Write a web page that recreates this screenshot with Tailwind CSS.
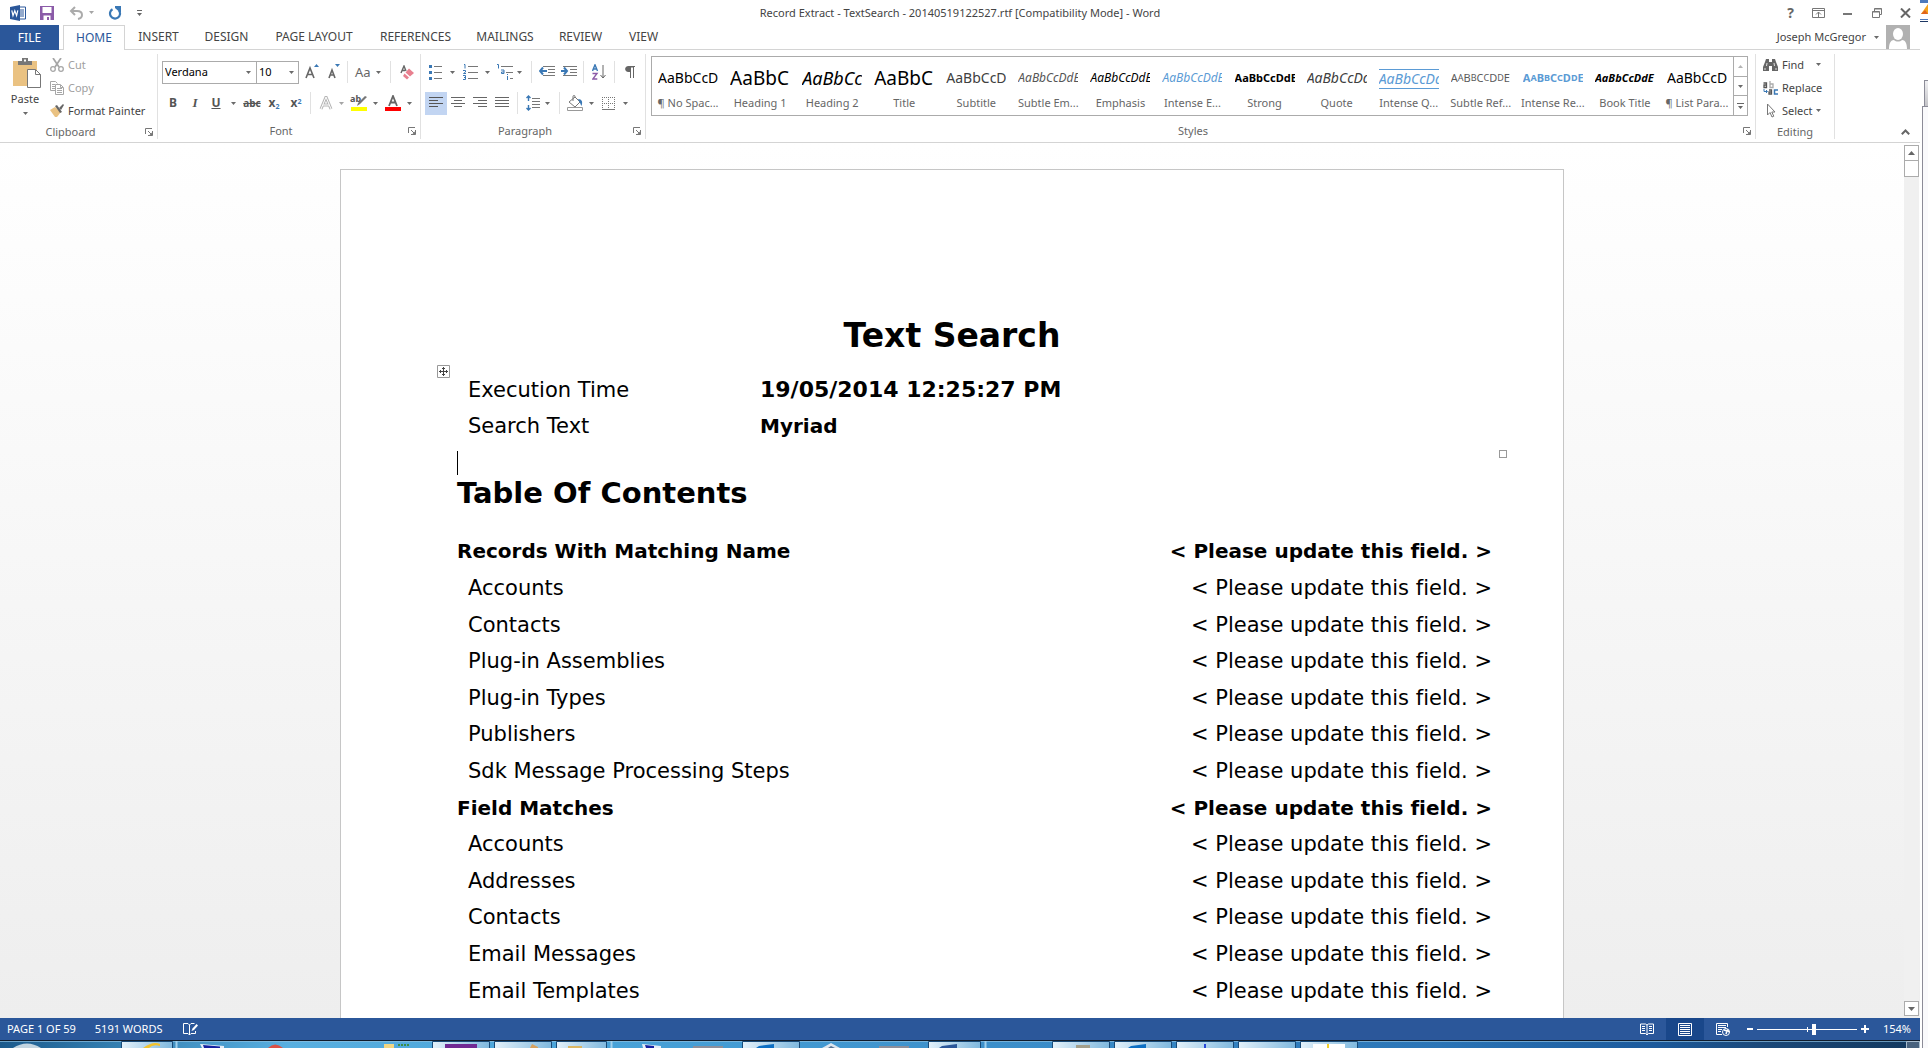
<!DOCTYPE html>
<html lang="en">
<head>
<meta charset="utf-8">
<title>Record Extract - Word</title>
<script src="https://cdn.jsdelivr.net/npm/@tailwindcss/browser@4"></script>
</head>
<body class="h-screen overflow-hidden bg-white font-['Noto_Sans','Open_Sans',sans-serif] text-[11px] leading-4 text-[#444]">

<svg class="hidden">
  <symbol id="dn" viewBox="0 0 5 3"><path d="M0 0h5L2.500 3z" fill="#6a6a6a"/></symbol>
  <symbol id="launch" viewBox="0 0 8 8"><path d="M.5 6V.5H7" fill="none" stroke="#777"/><path d="M3 3l3 3M7.500 3v4.500H3" fill="none" stroke="#777"/><path d="M4 7.500h3.500V4z" fill="#777"/></symbol>
</svg>

<div class="flex h-full">
<div class="flex min-w-0 flex-1 flex-col">

  <!-- Title bar -->
  <header class="relative flex h-[25px] shrink-0 items-center justify-center">
    <div class="absolute inset-y-0 left-[10px] flex items-center">
      <svg class="mr-[14px] h-4 w-4" viewBox="0 0 16 16"><path d="M8 2h7.500v12H8z" fill="#fff" stroke="#2b579a"/><path d="M9 5h5M9 7h5M9 9h5M9 11h5" stroke="#2b579a"/><path d="M0 2l10-2v16L0 14z" fill="#2b579a"/><path d="M1.800 5.300l1.200 5.400 1.800-5 1.800 5 1.200-5.400" fill="none" stroke="#fff" stroke-width="1.200"/></svg>
      <button aria-label="Save" class="mr-[15px]"><svg class="h-[14px] w-[14px]" viewBox="0 0 14 14"><path d="M0 0h14v14H0z" fill="#8b5ba8"/><path d="M2.500 1h9v6h-9zM3.500 9.500h7V14H9v-3H7v3H3.500z" fill="#fff"/></svg></button>
      <button aria-label="Undo" class="mr-[6px]"><svg class="h-[14px] w-[14px]" viewBox="0 0 14 14"><path d="M6 1L2 5l4 4M2 5h6c3 0 5 1.500 5 4 0 2-1.500 3.500-4 4" fill="none" stroke="#ababab" stroke-width="2"/></svg></button>
      <svg class="mr-[14px] h-[3px] w-[5px] opacity-60"><use href="#dn"/></svg>
      <button aria-label="Redo" class="mr-[15px]"><svg class="h-[14px] w-[14px]" viewBox="0 0 14 14"><path d="M4.500 3.200A5 5 0 1 0 11 4.500" fill="none" stroke="#3a78b5" stroke-width="2.200"/><path d="M7 0h6v6h-1.500L7 2z" fill="#3a78b5"/></svg></button>
      <button aria-label="Customize"><svg class="h-[6px] w-[5px]" viewBox="0 0 5 6"><path d="M0 0h5v1H0zM0 3h5L2.500 6z" fill="#666"/></svg></button>
    </div>
    <h1>Record Extract - TextSearch - 20140519122527.rtf [Compatibility Mode] - Word</h1>
    <div class="absolute inset-y-0 right-[9px] flex items-center gap-[18px]">
      <button aria-label="Help" class="text-[14px] font-bold text-[#666]">?</button>
      <button aria-label="Ribbon display"><svg class="h-[10px] w-[13px]" viewBox="0 0 13 10"><path d="M.5.500h12v9H.5zM.5 2.500h12M6.500 9V4M4 6.500L6.500 4 9 6.500" fill="none" stroke="#777"/></svg></button>
      <button aria-label="Minimize"><svg class="h-[10px] w-[9px]" viewBox="0 0 9 10"><path d="M0 5h9v2H0z" fill="#777"/></svg></button>
      <button aria-label="Restore" class="ml-[2px]"><svg class="h-[10px] w-[10px]" viewBox="0 0 10 10"><path d="M2.500 3V.500h7v6H7.500M2.500 1h7" fill="none" stroke="#777"/><path d="M.5 3.500h7v6h-7zM.5 4h7" fill="none" stroke="#777"/></svg></button>
      <button aria-label="Close"><svg class="h-[10px] w-[11px]" viewBox="0 0 11 10"><path d="M1 .5l9 9M10 .5l-9 9" stroke="#666" stroke-width="2"/></svg></button>
    </div>
  </header>

  <!-- Ribbon tabs -->
  <nav class="flex h-[25px] shrink-0 items-stretch border-b border-[#d4d4d4] text-[12px]">
    <a href="#" class="-mb-px flex w-[59px] items-center justify-center bg-[#2b579a] text-white">FILE</a>
    <a href="#" class="-mb-px ml-1 flex w-[62px] items-center justify-center border border-b-0 border-[#d4d4d4] bg-white text-[#2b579a]">HOME</a>
    <a href="#" class="flex w-[67px] items-center justify-center">INSERT</a>
    <a href="#" class="flex w-[69px] items-center justify-center">DESIGN</a>
    <a href="#" class="flex w-[106px] items-center justify-center">PAGE LAYOUT</a>
    <a href="#" class="flex w-[97px] items-center justify-center">REFERENCES</a>
    <a href="#" class="flex w-[82px] items-center justify-center">MAILINGS</a>
    <a href="#" class="flex w-[69px] items-center justify-center">REVIEW</a>
    <a href="#" class="flex w-[57px] items-center justify-center">VIEW</a>
    <button class="ml-auto mr-[10px] flex items-center"><span class="text-[11px]">Joseph McGregor</span><svg class="ml-2 mr-[7px] h-[3px] w-[5px]"><use href="#dn"/></svg><svg class="h-6 w-6" viewBox="0 0 24 24"><path d="M0 0h24v24H0z" fill="#b1b1b1"/><ellipse cx="12" cy="9" rx="5" ry="6" fill="#fff"/><path d="M3 24c0-6 2-9 5-9 2 2 6 2 8 0 3 0 5 3 5 9z" fill="#fff"/></svg></button>
  </nav>

  <!-- Ribbon -->
  <div class="flex h-[93px] shrink-0 border-b border-[#d4d4d4] pt-1 pb-[3px]">

    <section class="flex w-[158px] flex-col border-r border-[#e1e1e1]">
      <div class="flex h-[72px]">
        <button class="flex w-[50px] flex-col items-center pt-1">
          <svg class="h-[30px] w-[28px] ml-1" viewBox="0 0 28 30"><path d="M0 3h24v25H0z" fill="#eac282"/><path d="M5 3h4V0h6v3h4v4H5z" fill="#777"/><path d="M11 1.500h2v2h-2z" fill="#fff"/><path d="M14.500 11.500h8l5 5v13h-13z" fill="#fff" stroke="#777"/><path d="M22.500 11.500v5h5" fill="none" stroke="#777"/></svg>
          <span class="mt-[3px]">Paste</span>
          <svg class="mt-[5px] h-[3px] w-[5px]"><use href="#dn"/></svg>
        </button>
        <div class="-mt-px flex flex-col">
          <button class="flex h-[23px] items-center gap-1 text-[#a0a0a0]"><svg class="h-[14px] w-[14px]" viewBox="0 0 14 14"><path d="M3 0l6 9M11 0L5 9" stroke="#a6a6a6" stroke-width="1.700"/><circle cx="3" cy="11" r="2.300" fill="none" stroke="#a6a6a6" stroke-width="1.300"/><circle cx="11" cy="11" r="2.300" fill="none" stroke="#a6a6a6" stroke-width="1.300"/></svg>Cut</button>
          <button class="flex h-[23px] items-center gap-1 text-[#a0a0a0]"><svg class="h-[14px] w-[14px]" viewBox="0 0 14 14"><path d="M5 9.500H.5v-9h5l2 2" fill="none" stroke="#a6a6a6"/><path d="M2 3.500h3M2 5.500h3M2 7.500h3" stroke="#a6a6a6"/><path d="M5.500 3.500h5l3 3v7h-8z" fill="#fff" stroke="#a6a6a6"/><path d="M7 7.500h5M7 9.500h5M7 11.500h5M10.500 4v2.500H13" fill="none" stroke="#a6a6a6"/></svg>Copy</button>
          <button class="flex h-[23px] items-center gap-1"><svg class="h-[14px] w-[14px]" viewBox="0 0 14 14"><path d="M5 3L0 6l5 7h2l4-5z" fill="#eac282"/><path d="M5 2l2-1 5 7-2 1z" fill="#666"/><path d="M9 4l4-4 1 1-3 5z" fill="#666"/></svg>Format Painter</button>
        </div>
      </div>
      <div class="relative mt-[2px] text-center text-[#666] pr-4">Clipboard<svg class="absolute right-1 top-1 h-2 w-2"><use href="#launch"/></svg></div>
    </section>

    <section class="flex w-[263px] flex-col border-r border-[#e1e1e1]">
      <div class="flex h-[72px] flex-col pl-1 pt-[7px]">
        <div class="flex h-[22px] items-center">
          <label class="relative"><select aria-label="Font" class="block h-[23px] w-[95px] appearance-none border border-[#ababab] bg-white pl-[2px] text-[11px] text-black"><option>Verdana</option></select><svg class="absolute right-[6px] top-[10px] h-[3px] w-[5px]"><use href="#dn"/></svg></label>
          <label class="relative -ml-px"><select aria-label="Font size" class="block h-[23px] w-[43px] appearance-none border border-[#ababab] bg-white pl-[2px] text-[11px] text-black"><option>10</option></select><svg class="absolute right-[5px] top-[10px] h-[3px] w-[5px]"><use href="#dn"/></svg></label>
          <button aria-label="Grow font" class="ml-[6px] w-[22px]"><svg class="h-[16px] w-[16px]" viewBox="0 0 16 16"><path d="M1 14L5 4l4 10M2.500 10.500h5" fill="none" stroke="#666" stroke-width="1.600"/><path d="M9 3l2.500-3L14 3z" fill="#3a78b5"/></svg></button>
          <button aria-label="Shrink font" class="w-[20px]"><svg class="h-[16px] w-[16px]" viewBox="0 0 16 16"><path d="M2 14l3-8 3 8M3 11h4" fill="none" stroke="#666" stroke-width="1.600"/><path d="M8 0l2.500 3L13 0z" fill="#3a78b5"/></svg></button>
          <span class="h-[22px] w-px bg-[#e1e1e1]"></span>
          <button class="ml-[7px] flex items-center gap-[5px] text-[13px] text-[#666]">Aa<svg class="h-[3px] w-[5px]"><use href="#dn"/></svg></button>
          <span class="ml-[9px] h-[22px] w-px bg-[#e1e1e1]"></span>
          <button aria-label="Clear formatting" class="ml-[9px]"><svg class="h-[15px] w-[15px]" viewBox="0 0 15 15"><path d="M1 8l3-7 2 5M2 5.500h3" fill="none" stroke="#666" stroke-width="1.400"/><path d="M9 3.500L14 8l-4 3.500L5.500 7.500z" fill="#e8808f"/><path d="M4.500 8.500L9 12.500 7 14.500 3 11z" fill="#e8808f"/></svg></button>
        </div>
        <div class="mt-[9px] flex h-[22px] items-center text-[#555]">
          <button class="w-[22px] text-[12px] font-bold">B</button>
          <button class="w-[22px] font-['Liberation_Serif',serif] text-[13px] font-bold italic">I</button>
          <button class="w-[20px] text-[12px] font-bold underline">U</button>
          <svg class="mx-[5px] h-[3px] w-[5px]"><use href="#dn"/></svg>
          <button class="w-[22px] text-[10px] font-bold line-through">abc</button>
          <button class="w-[22px] text-[12px] font-bold">x<sub class="text-[7px] text-[#3a78b5]">2</sub></button>
          <button class="w-[22px] text-[12px] font-bold">x<sup class="text-[7px] text-[#3a78b5]">2</sup></button>
          <span class="ml-[3px] h-[22px] w-px bg-[#e1e1e1]"></span>
          <button aria-label="Text effects" class="ml-[8px]"><svg class="h-[14px] w-[14px]" viewBox="0 0 14 14"><path d="M2 13L7 1l5 12M4 9h6" fill="none" stroke="#b5b5b5" stroke-width="3"/><path d="M2 13L7 1l5 12M4 9h6" fill="none" stroke="#fff"/></svg></button>
          <svg class="ml-[6px] h-[3px] w-[5px] opacity-60"><use href="#dn"/></svg>
          <button aria-label="Highlight" class="relative ml-[7px] h-[16px] w-[16px] text-[9px] font-bold"><span class="absolute -left-px -top-1">ab</span><svg class="absolute inset-0 h-4 w-4" viewBox="0 0 16 16"><path d="M6 11l1-3 7-7 2 1-7 7z" fill="#777"/><path d="M0 12h16v4H0z" fill="#ff0"/></svg></button>
          <svg class="ml-[6px] h-[3px] w-[5px]"><use href="#dn"/></svg>
          <button aria-label="Font color" class="ml-[7px]"><svg class="h-4 w-4" viewBox="0 0 16 16"><path d="M4 11L8 1l4 10M5.500 7.500h5" fill="none" stroke="#666" stroke-width="1.800"/><path d="M0 12h16v4H0z" fill="red"/></svg></button>
          <svg class="ml-[6px] h-[3px] w-[5px]"><use href="#dn"/></svg>
        </div>
      </div>
      <div class="relative mt-[2px] pr-4 text-center text-[#666]">Font<svg class="absolute right-1 top-1 h-2 w-2"><use href="#launch"/></svg></div>
    </section>

    <section class="flex w-[225px] flex-col border-r border-[#e1e1e1]">
      <div class="flex h-[72px] flex-col pl-1 pt-[7px]">
        <div class="flex h-[22px] items-center">
          <button aria-label="Bullets" class="ml-1"><svg class="h-4 w-[14px]" viewBox="0 0 14 16"><path d="M0 1h3v3H0zM0 7h3v3H0zM0 13h3v3H0z" fill="#3a78b5"/><path d="M5 2.500h8M5 8.500h8M5 14.500h8" stroke="#777"/></svg></button>
          <svg class="ml-[7px] h-[3px] w-[5px]"><use href="#dn"/></svg>
          <button aria-label="Numbering" class="ml-[8px]"><svg class="h-4 w-[15px]" viewBox="0 0 15 16"><path d="M1 .5h1v4M0 6.500h2.500v1.500L.5 9.500H3M0 11.500h2.500v4H0M1 13.500h1" fill="none" stroke="#3a78b5"/><path d="M5 2.500h10M5 8.500h10M5 14.500h10" stroke="#777"/></svg></button>
          <svg class="ml-[7px] h-[3px] w-[5px]"><use href="#dn"/></svg>
          <button aria-label="Multilevel list" class="ml-[7px]"><svg class="h-4 w-[16px]" viewBox="0 0 16 16"><path d="M0 .5h1.500v4M4 6h3v3.500H4.500V8H7M10.500 10v1M10.500 12v4" fill="none" stroke="#3a78b5"/><path d="M4 2.500h12M9 8.500h7M13 14.500h3" stroke="#777"/></svg></button>
          <svg class="ml-[4px] h-[3px] w-[5px]"><use href="#dn"/></svg>
          <span class="ml-[9px] h-[22px] w-px bg-[#e1e1e1]"></span>
          <button aria-label="Decrease indent" class="ml-[7px]"><svg class="h-[14px] w-4" viewBox="0 0 16 14"><path d="M4 1.500h12M9 4.500h7M9 7.500h7M4 10.500h12" stroke="#777"/><path d="M4 2.500L1 6l3 3.500M1 6h7" fill="none" stroke="#3a78b5" stroke-width="2"/></svg></button>
          <button aria-label="Increase indent" class="ml-[6px]"><svg class="h-[14px] w-4" viewBox="0 0 16 14"><path d="M2 1.500h14M9 4.500h7M9 7.500h7M2 10.500h14" stroke="#777"/><path d="M3 2.500L6 6 3 9.500M0 6h6" fill="none" stroke="#3a78b5" stroke-width="2"/></svg></button>
          <span class="ml-[6px] h-[22px] w-px bg-[#e1e1e1]"></span>
          <button aria-label="Sort" class="ml-[8px]"><svg class="h-4 w-[14px]" viewBox="0 0 14 16"><path d="M.5 7L3 .8 5.500 7M1.500 5h3" fill="none" stroke="#3a78b5" stroke-width="1.400"/><path d="M.5 9.500h4.500L.8 15h4.500" fill="none" stroke="#8b5ba8" stroke-width="1.400"/><path d="M11 1v13M8.500 11l2.500 3 2.500-3" fill="none" stroke="#666"/></svg></button>
          <span class="ml-[8px] h-[22px] w-px bg-[#e1e1e1]"></span>
          <button aria-label="Show marks" class="ml-[10px]"><svg class="h-[13px] w-[10px]" viewBox="0 0 10 13"><path d="M10 0H3.500C-1 0-1 6 3.500 6H5v6h1V1.500h2V12h1V1h1z" fill="#666"/></svg></button>
        </div>
        <div class="mt-[9px] flex h-[22px] items-center">
          <button aria-label="Align left" class="flex h-[23px] w-[22px] items-center justify-center bg-[#c2d5f2]"><svg class="h-3 w-[14px]" viewBox="0 0 14 12"><path d="M0 .5h14M0 3.500h9M0 6.500h14M0 9.500h9" stroke="#555"/></svg></button>
          <button aria-label="Center" class="flex h-[23px] w-[22px] items-center justify-center"><svg class="h-3 w-[14px]" viewBox="0 0 14 12"><path d="M0 .5h14M3 3.500h8M0 6.500h14M3 9.500h8" stroke="#666"/></svg></button>
          <button aria-label="Align right" class="flex h-[23px] w-[22px] items-center justify-center"><svg class="h-3 w-[14px]" viewBox="0 0 14 12"><path d="M0 .5h14M5 3.500h9M0 6.500h14M5 9.500h9" stroke="#666"/></svg></button>
          <button aria-label="Justify" class="flex h-[23px] w-[22px] items-center justify-center"><svg class="h-3 w-[14px]" viewBox="0 0 14 12"><path d="M0 .5h14M0 3.500h14M0 6.500h14M0 9.500h14" stroke="#666"/></svg></button>
          <span class="ml-[4px] h-[22px] w-px bg-[#e1e1e1]"></span>
          <button aria-label="Line spacing" class="ml-[8px]"><svg class="h-4 w-[14px]" viewBox="0 0 14 16"><path d="M6 3.500h8M6 6.500h8M6 9.500h8M6 12.500h8" stroke="#777"/><path d="M2.500 1v5M2.500 10v5M.5 3l2-2 2 2M.5 13l2 2 2-2" fill="none" stroke="#3a78b5" stroke-width="1.400"/></svg></button>
          <svg class="ml-[5px] h-[3px] w-[5px]"><use href="#dn"/></svg>
          <span class="ml-[9px] h-[22px] w-px bg-[#e1e1e1]"></span>
          <button aria-label="Shading" class="ml-[7px]"><svg class="h-4 w-4" viewBox="0 0 16 16"><path d="M2 7l6-5 5 5-5 5zM6 6V1.500Q6 .5 7 .5t1 1V3" fill="#fff" stroke="#777"/><path d="M11 4c4 0 5 3 3.500 7-1-1-1-3-2-4z" fill="#3a78b5"/><path d="M.5 12.500h15v3H.5z" fill="#fff" stroke="#999"/></svg></button>
          <svg class="ml-[6px] h-[3px] w-[5px]"><use href="#dn"/></svg>
          <button aria-label="Borders" class="ml-[8px]"><svg class="h-[13px] w-[13px]" viewBox="0 0 13 13"><path d="M0 .5h13M0 6.500h13M.5 0v13M6.500 0v13M12.500 0v13" stroke="#777" stroke-dasharray="1 1"/><path d="M0 12.500h13" stroke="#777"/></svg></button>
          <svg class="ml-[8px] h-[3px] w-[5px]"><use href="#dn"/></svg>
        </div>
      </div>
      <div class="relative mt-[2px] pr-4 text-center text-[#666]">Paragraph<svg class="absolute right-1 top-1 h-2 w-2"><use href="#launch"/></svg></div>
    </section>

    <section class="flex min-w-0 flex-1 flex-col border-r border-[#e1e1e1] pl-[5px]">
      <div class="h-[72px] pr-[7px] pt-[2px]">
        <div class="flex h-[60px] border border-[#ababab]">
          <div class="grid min-w-0 flex-1 grid-cols-15 text-center text-[#666]">
            <button class="flex flex-col items-center"><span class="flex h-[42px] w-[60px] items-center overflow-hidden whitespace-nowrap text-[14px] text-black">AaBbCcD</span><span class="-mt-1">¶ No Spac...</span></button>
            <button class="flex flex-col items-center"><span class="flex h-[42px] w-[60px] items-center overflow-hidden whitespace-nowrap text-[19px] text-black">AaBbC</span><span class="-mt-1">Heading 1</span></button>
            <button class="flex flex-col items-center"><span class="flex h-[42px] w-[60px] items-center overflow-hidden whitespace-nowrap text-[18px] italic text-black">AaBbCc</span><span class="-mt-1">Heading 2</span></button>
            <button class="flex flex-col items-center"><span class="flex h-[42px] w-[60px] items-center overflow-hidden whitespace-nowrap text-[19px] text-black">AaBbC</span><span class="-mt-1">Title</span></button>
            <button class="flex flex-col items-center"><span class="flex h-[42px] w-[60px] items-center overflow-hidden whitespace-nowrap text-[14px] text-[#404040]">AaBbCcD</span><span class="-mt-1">Subtitle</span></button>
            <button class="flex flex-col items-center"><span class="flex h-[42px] w-[60px] items-center overflow-hidden whitespace-nowrap text-[12px] italic text-[#555]">AaBbCcDdE</span><span class="-mt-1">Subtle Em...</span></button>
            <button class="flex flex-col items-center"><span class="flex h-[42px] w-[60px] items-center overflow-hidden whitespace-nowrap text-[12px] italic text-black">AaBbCcDdE</span><span class="-mt-1">Emphasis</span></button>
            <button class="flex flex-col items-center"><span class="flex h-[42px] w-[60px] items-center overflow-hidden whitespace-nowrap text-[12px] italic text-[#5b9bd5]">AaBbCcDdE</span><span class="-mt-1">Intense E...</span></button>
            <button class="flex flex-col items-center"><span class="flex h-[42px] w-[60px] items-center overflow-hidden whitespace-nowrap text-[11px] font-bold text-black">AaBbCcDdE</span><span class="-mt-1">Strong</span></button>
            <button class="flex flex-col items-center"><span class="flex h-[42px] w-[60px] items-center overflow-hidden whitespace-nowrap text-[14px] italic text-[#404040]">AaBbCcDd</span><span class="-mt-1">Quote</span></button>
            <button class="flex flex-col items-center"><span class="mt-3 flex h-[20px] w-[60px] items-center overflow-hidden whitespace-nowrap border-y border-[#5b9bd5] text-[14px] italic text-[#5b9bd5]">AaBbCcDd</span><span class="mt-[6px]">Intense Q...</span></button>
            <button class="flex flex-col items-center"><span class="flex h-[42px] w-[60px] items-center overflow-hidden whitespace-nowrap text-[11px] text-[#5a5a5a]">A<small class="text-[9px]">A</small>B<small class="text-[9px]">B</small>C<small class="text-[9px]">C</small>D<small class="text-[9px]">D</small>E</span><span class="-mt-1">Subtle Ref...</span></button>
            <button class="flex flex-col items-center"><span class="flex h-[42px] w-[60px] items-center overflow-hidden whitespace-nowrap text-[11px] font-bold text-[#5b9bd5]">A<small class="text-[9px]">A</small>B<small class="text-[9px]">B</small>C<small class="text-[9px]">C</small>D<small class="text-[9px]">D</small>E</span><span class="-mt-1">Intense Re...</span></button>
            <button class="flex flex-col items-center"><span class="flex h-[42px] w-[60px] items-center overflow-hidden whitespace-nowrap text-[11px] font-bold italic text-black">AaBbCcDdE</span><span class="-mt-1">Book Title</span></button>
            <button class="flex flex-col items-center"><span class="flex h-[42px] w-[60px] items-center overflow-hidden whitespace-nowrap text-[14px] text-black">AaBbCcD</span><span class="-mt-1">¶ List Para...</span></button>
          </div>
          <div class="-my-px -mr-px flex w-[15px] flex-col border border-[#ababab]">
            <button aria-label="Previous styles" class="flex flex-1 items-center justify-center"><svg class="h-[3px] w-[5px] rotate-180 opacity-50"><use href="#dn"/></svg></button>
            <button aria-label="Next styles" class="flex flex-1 items-center justify-center border-y border-[#ababab]"><svg class="h-[3px] w-[5px]"><use href="#dn"/></svg></button>
            <button aria-label="More styles" class="flex flex-1 items-center justify-center"><svg class="h-[6px] w-[7px]" viewBox="0 0 7 6"><path d="M0 0h7v1H0zM1 3h5L3.500 6z" fill="#666"/></svg></button>
          </div>
        </div>
      </div>
      <div class="relative mt-[2px] pr-5 text-center text-[#666]">Styles<svg class="absolute right-1 top-1 h-2 w-2"><use href="#launch"/></svg></div>
    </section>

    <section class="flex w-[79px] flex-col border-r border-[#e1e1e1]">
      <div class="flex h-[72px] flex-col pl-[7px]">
        <button class="-mt-px flex h-[23px] items-center gap-1"><svg class="h-3 w-[15px]" viewBox="0 0 15 12"><path d="M3 0h3v3h3V0h3l1 3 2 5v4H9V7H6v5H0V8l2-5z" fill="#666"/><path d="M2 9v2M4 4L3.500 7M13 9v2M11 4l.5 3" stroke="#fff" stroke-width=".8"/></svg>Find<svg class="ml-2 h-[3px] w-[5px]"><use href="#dn"/></svg></button>
        <button class="flex h-[23px] items-center gap-1"><svg class="h-[14px] w-[15px]" viewBox="0 0 15 14"><path d="M.5 2h3v4.500H1V4h2.500" fill="none" stroke="#555" stroke-width="1.300"/><path d="M7 0v6.500h3V3H7" fill="none" stroke="#aaa" stroke-width="1.300"/><path d="M1 8v2.500h3M3 9l1.500 1.500L3 12" fill="none" stroke="#3a78b5"/><path d="M6 9h2.500v4H6v-2h2.500" fill="none" stroke="#555" stroke-width="1.300"/><path d="M15 9h-3.500v4H15" fill="none" stroke="#3a78b5" stroke-width="1.500"/></svg>Replace</button>
        <button class="flex h-[23px] items-center gap-1"><svg class="h-[15px] w-[15px]" viewBox="0 0 15 15"><path d="M4.500 1v11l2.500-2.500 2 4.500 1.800-.8-2-4.200H12z" fill="#fff" stroke="#777"/></svg>Select<svg class="-ml-px h-[3px] w-[5px]"><use href="#dn"/></svg></button>
      </div>
      <div class="mt-[2px] text-center text-[#666]">Editing</div>
    </section>
    <div class="flex w-[85px] items-end justify-end pb-1 pr-[10px]"><button aria-label="Collapse ribbon"><svg class="h-[6px] w-[9px]" viewBox="0 0 9 6"><path d="M.8 5.200L4.500 1.500l3.700 3.700" fill="none" stroke="#666" stroke-width="2"/></svg></button></div>
  </div>

  <!-- Document area -->
  <div class="flex min-h-0 flex-1 overflow-hidden bg-linear-to-b from-white to-[#eeeeee]">
    <main class="flex min-w-0 flex-1 justify-center overflow-hidden pt-[26px]">
      <article class="relative h-[1800px] w-[1224px] shrink-0 border border-[#c6c6c6] bg-white px-[116px] font-['DejaVu_Sans',Verdana,sans-serif] text-[21px] leading-[36px] text-black [font-variant-ligatures:none]">
        <h2 class="mt-[142px] text-center text-[33px] font-bold leading-[48px]">Text Search</h2>
        <div class="relative mt-[12px]">
          <svg class="absolute -left-[20px] -top-[7px] h-[13px] w-[13px]" viewBox="0 0 13 13"><path d="M.5.500h12v12H.5z" fill="#fff" stroke="#999"/><path d="M6.500 2v9M2 6.500h9M5 3.500h3M5 9.500h3M3.500 5v3M9.500 5v3" stroke="#444"/></svg>
          <table class="w-full text-left">
            <tbody>
              <tr><td class="w-[303px] pl-[11px]">Execution Time</td><td class="text-[22px] font-bold">19/05/2014 12:25:27 PM</td></tr>
              <tr><td class="pl-[11px]">Search Text</td><td class="text-[20px] font-bold">Myriad</td></tr>
            </tbody>
          </table>
          <span class="absolute -bottom-[14px] -right-[60px] h-2 w-2 border border-[#999]"></span>
        </div>
        <div class="flex h-[31px] items-end"><span class="h-6 w-px bg-black"></span></div>
        <h2 class="-mt-[6px] text-[29px] font-bold leading-[48px]">Table Of Contents</h2>
        <table class="-mr-[45px] mt-[16px] h-[476px] w-[1035px]">
          <tbody class="[&_td+td]:text-right">
            <tr class="text-[20px] font-bold"><td>Records With Matching Name</td><td>&lt; Please update this field. &gt;</td></tr>
            <tr><td class="pl-[11px]">Accounts</td><td>&lt; Please update this field. &gt;</td></tr>
            <tr><td class="pl-[11px]">Contacts</td><td>&lt; Please update this field. &gt;</td></tr>
            <tr><td class="pl-[11px]">Plug-in Assemblies</td><td>&lt; Please update this field. &gt;</td></tr>
            <tr><td class="pl-[11px]">Plug-in Types</td><td>&lt; Please update this field. &gt;</td></tr>
            <tr><td class="pl-[11px]">Publishers</td><td>&lt; Please update this field. &gt;</td></tr>
            <tr><td class="pl-[11px]">Sdk Message Processing Steps</td><td>&lt; Please update this field. &gt;</td></tr>
            <tr class="text-[20px] font-bold"><td>Field Matches</td><td>&lt; Please update this field. &gt;</td></tr>
            <tr><td class="pl-[11px]">Accounts</td><td>&lt; Please update this field. &gt;</td></tr>
            <tr><td class="pl-[11px]">Addresses</td><td>&lt; Please update this field. &gt;</td></tr>
            <tr><td class="pl-[11px]">Contacts</td><td>&lt; Please update this field. &gt;</td></tr>
            <tr><td class="pl-[11px]">Email Messages</td><td>&lt; Please update this field. &gt;</td></tr>
            <tr><td class="pl-[11px]">Email Templates</td><td>&lt; Please update this field. &gt;</td></tr>
          </tbody>
        </table>
      </article>
    </main>
    <div class="mr-[1px] mt-[2px] mb-[2px] flex w-[15px] shrink-0 flex-col bg-[#f0f0f0]">
      <button aria-label="Scroll up" class="flex h-[16px] items-center justify-center border border-[#ababab] bg-white"><svg class="h-1 w-[7px]" viewBox="0 0 7 4"><path d="M0 4h7L3.500 0z" fill="#666"/></svg></button>
      <div class="-mt-px h-[17px] border border-[#ababab] bg-white"></div>
      <button aria-label="Scroll down" class="mt-auto flex h-[15px] items-center justify-center border border-[#ababab] bg-white"><svg class="h-1 w-[7px]" viewBox="0 0 7 4"><path d="M0 0h7L3.500 4z" fill="#666"/></svg></button>
    </div>
  </div>

  <!-- Status bar -->
  <footer class="flex h-[22px] shrink-0 items-center bg-[#2b579a] pl-[7px] pr-[9px] text-white">
    <span>PAGE 1 OF 59</span>
    <span class="ml-[19px]">5191 WORDS</span>
    <svg class="ml-[21px] h-[13px] w-[15px]" viewBox="0 0 15 13"><path d="M6.500 12V2L5 .5H.5v10H5zM6.500 2L8 .5h3.500M6.500 12L8 10.500h4.500V8" fill="none" stroke="#fff"/><path d="M8.500 8l1-2.500L13.500 1 15 2.500 11 7z" fill="#fff"/></svg>
    <button aria-label="Read mode" class="ml-auto mr-[12px]"><svg class="h-[13px] w-[14px]" viewBox="0 0 14 13"><path d="M.5 1h5l1.500 1 1.500-1h5v9.500h-5L7 12l-1.500-1.500h-5zM7 2v10M2 3.500h3M2 5.500h3M2 7.500h3M9 3.500h3M9 5.500h3M9 7.500h3" fill="none" stroke="#fff"/></svg></button>
    <button aria-label="Print layout" class="flex h-[22px] w-[38px] items-center justify-center bg-[#19478a]"><svg class="h-[13px] w-[14px]" viewBox="0 0 14 13"><path d="M.5.500h13v12H.5zM2 2.500h10M2 4.500h10M2 6.500h10M2 8.500h10M2 10.500h10" fill="none" stroke="#fff"/></svg></button>
    <button aria-label="Web layout" class="ml-[12px]"><svg class="h-[13px] w-[14px]" viewBox="0 0 14 13"><path d="M6 11.500H.5V.500h11V4M2 2.500h8M2 4.500h8M2 6.500h4M2 8.500h3" fill="none" stroke="#fff"/><circle cx="10" cy="9" r="3.500" fill="#2b579a" stroke="#fff"/><path d="M8 7l3 1-1 3M11 6.500L13 9" stroke="#fff" fill="none" stroke-width="1.500"/></svg></button>
    <button aria-label="Zoom out" class="ml-[17px]"><svg class="h-2 w-[6px]" viewBox="0 0 6 8"><path d="M0 3h6v2H0z" fill="#fff"/></svg></button>
    <label class="relative ml-[4px] flex h-[11px] w-[100px] items-center"><span class="absolute left-[50px] top-[3px] h-[5px] w-px bg-white"></span><input type="range" aria-label="Zoom" min="0" max="100" value="57" class="h-px w-full appearance-none bg-white [&::-webkit-slider-thumb]:h-[11px] [&::-webkit-slider-thumb]:w-1 [&::-webkit-slider-thumb]:appearance-none [&::-webkit-slider-thumb]:bg-white"></label>
    <button aria-label="Zoom in" class="ml-[4px] mr-[14px]"><svg class="h-2 w-2" viewBox="0 0 8 8"><path d="M3 0h2v3h3v2H5v3H3V5H0V3h3z" fill="#fff"/></svg></button>
    <span>154%</span>
  </footer>

  <!-- Desktop taskbar, top edge -->
  <svg class="h-2 w-full shrink-0" viewBox="0 0 1920 8" preserveAspectRatio="none">
    <defs>
      <linearGradient id="bar"><stop offset="0" stop-color="#1c5a8c"/><stop offset=".05" stop-color="#2f79ab"/><stop offset=".15" stop-color="#58afe0"/><stop offset=".32" stop-color="#48a2d8"/><stop offset=".55" stop-color="#3a8cc8"/><stop offset=".75" stop-color="#2a74b6"/><stop offset=".86" stop-color="#1c5a9c"/><stop offset=".92" stop-color="#1b4878"/><stop offset="1" stop-color="#12385e"/></linearGradient>
      <linearGradient id="btn"><stop offset="0" stop-color="#e3f1fa"/><stop offset="1" stop-color="#7fb8de"/></linearGradient>
    </defs>
    <path d="M0 0h1920v8H0z" fill="url(#bar)"/>
    <path d="M0 1.500h1920" stroke="#8fc0e0" stroke-opacity=".7"/>
    <g fill="url(#btn)" stroke="#184a78"><path d="M121.500 1.500h51V9h-51z"/><path d="M432.500 1.500h57V9h-57z"/><path d="M494.500 1.500h57V9h-57z"/><path d="M556.500 1.500h50V9h-50z"/><path d="M742.500 1.500h57V9h-57z"/><path d="M928.500 1.500h52V9h-52z"/><path d="M1052.500 1.500h57V9h-57z"/><path d="M1114.500 1.500h57V9h-57z"/><path d="M1176.500 1.500h57V9h-57z"/><path d="M1238.500 1.500h57V9h-57z"/><path d="M1300.500 1.500h57V9h-57z"/></g>
    <path d="M176.500 1v7M611.500 1v7M985.500 1v7" stroke="#9fd0ee" stroke-width="2"/>
    <path d="M13 8q14-9 28 0z" fill="#c3d5e1"/>
    <path d="M143 8q10-7 17-4v2q-7-2-11 2z" fill="#f3c32c"/>
    <path d="M200 4l24 2v2h-22z" fill="#e6eef8"/><path d="M203 5l17 1.500V8h-16z" fill="#1420a0"/>
    <path d="M268 8q7-7 15 0z" fill="#dc5145"/>
    <path d="M384 4h10v4h-10z" fill="#f2d683"/><path d="M398 5h12" stroke="#3d8e45" stroke-width="2" stroke-dasharray="2 1"/>
    <path d="M445 4h32v4h-32z" fill="#712a93"/><path d="M530 8l2-4 6 3v1z" fill="#d7a25f"/><path d="M568 6h14v2h-14z" fill="#dcb763"/>
    <path d="M642 4l19 2v2h-18z" fill="#e6eef8"/><path d="M645 5l9 1v2h-8z" fill="#1420a0"/>
    <path d="M693 6h30v2h-30zM879 6h30v2h-30z" fill="#8c8f9b"/>
    <path d="M756 8l3-2 15-2v4zM1128 8l3-2 15-2v4z" fill="#0d6fc4"/><path d="M939 8l3-2 15-2v4z" fill="#2b579a"/>
    <path d="M822 8l9-5 9 5z" fill="#dde6ee"/><path d="M828 8l3-2 4 2z" fill="#557292"/>
    <path d="M1076 5h14v3h-14z" fill="#a39f8b"/><path d="M1205 4v4" stroke="#2746d8" stroke-width="2"/>
    <path d="M1313 4h32v4h-32z" fill="#fff"/><path d="M1328 4v4" stroke="#f2d12c" stroke-width="2"/>
    <path d="M1906.500 1.500h13V9h-13z" fill="#48627e" stroke="#a8bccd"/>
    <path d="M0 0h1920v1H0z" fill="#101c2c"/>
  </svg>
</div>

<!-- Edge of the window behind -->
<aside class="flex w-2 shrink-0 flex-col bg-white">
  <svg class="h-[22px] w-2" viewBox="0 0 8 22"><path d="M0 0h8v3H0z" fill="#4c79bc"/><path d="M1 14L8 4v10z" fill="#f5a31c"/><path d="M1 14l4-4 3 4z" fill="#e0641c"/><path d="M0 19h8v1H0z" fill="#4c79bc"/><path d="M0 21h8v1H0z" fill="#1d3764"/></svg>
  <div class="ml-1 mt-[58px] h-[26px] border-l border-t border-[#8c8c98] bg-linear-to-b from-[#f0f0f2] to-[#c4c4c8]"></div>
  <div class="ml-[2px] flex-1 border-l border-t border-[#8c8c98] bg-[#fafafc]"></div>
</aside>
</div>
</body>
</html>
